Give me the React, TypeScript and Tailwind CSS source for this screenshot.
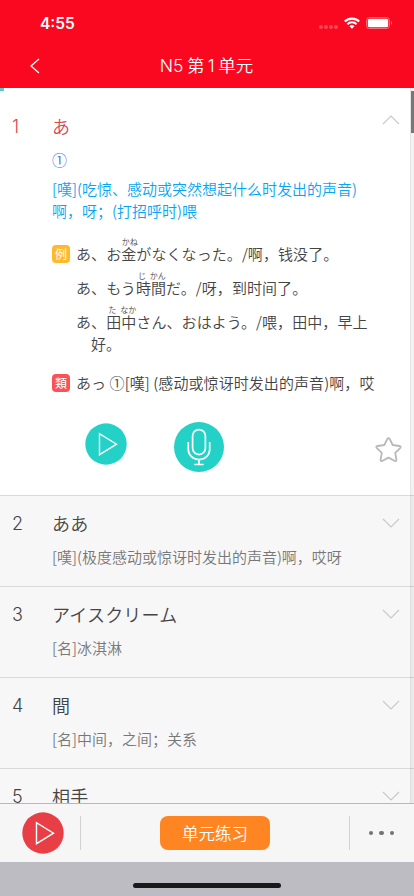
import type { ReactNode } from "react";

const words = [
  { id: 2, word: "ああ", meaning: "[嘆](极度感动或惊讶时发出的声音)啊，哎呀" },
  { id: 3, word: "アイスクリーム", meaning: "[名]冰淇淋" },
  { id: 4, word: "間", meaning: "[名]中间，之间；关系" },
  { id: 5, word: "相手", meaning: "[名]对方，对手" },
];

function StatusBar() {
  return (
    <div className="flex h-[44px] items-center justify-between pl-[40px] pr-[22px] pt-[2px]">
      <span className="pt-[1px] font-['Inter'] text-[15.5px] leading-none font-semibold">4:55</span>
      <div className="flex items-center">
        <div className="mt-[7px] mr-[6px] flex gap-[1px]">
          {[0, 1, 2, 3].map((i) => (
            <span key={i} className="size-[4px] rounded-full bg-white/25" />
          ))}
        </div>
        <svg width="16" height="12" viewBox="0 0 16 12" fill="none" stroke="currentColor" strokeWidth="2.1">
          <path d="M.8 4.6a10.2 10.2 0 0 1 14.4 0" />
          <path d="M3.4 7.2a6.5 6.5 0 0 1 9.2 0" />
          <path d="M5.5 9.3a3.5 3.5 0 0 1 5 0L8 11.8z" fill="currentColor" stroke="none" />
        </svg>
        <svg className="ml-[6px]" width="26" height="12" viewBox="0 0 26 12" fill="none">
          <rect x=".5" y=".5" width="23" height="11" rx="3" stroke="white" strokeOpacity=".4" />
          <rect x="1.8" y="1.8" width="20.4" height="8.4" rx="1.6" fill="white" />
          <path d="M25 4v4c1.2-.6 1.2-3.4 0-4" fill="white" fillOpacity=".5" />
        </svg>
      </div>
    </div>
  );
}

function Chevron({ up = false }: { up?: boolean }) {
  return (
    <svg width="18" height="10" viewBox="0 0 18 10" fill="none" stroke="#c8c8c8" strokeWidth="1.1">
      <path d={up ? "M1 9l8-8 8 8" : "M1 1l8 8 8-8"} />
    </svg>
  );
}

function PlayButton({ color }: { color: string }) {
  return (
    <button>
      <svg width="42" height="42" viewBox="0 0 42 42" fill="none">
        <circle cx="21" cy="21" r="20.7" fill={color} />
        <path d="M14.5 10.7v21l17-10.5z" stroke="white" strokeWidth="1.4" />
      </svg>
    </button>
  );
}

function Ruby({ reading, children }: { reading: string; children: ReactNode }) {
  return (
    <span className="relative inline-block leading-[22px]">
      {children}
      <span className="absolute -top-[6px] left-1/2 -translate-x-1/2 pl-[2px] text-[8px] leading-[10px] tracking-normal [word-spacing:2px] whitespace-pre">
        {reading}
      </span>
    </span>
  );
}

function Tag({ className, children }: { className: string; children: ReactNode }) {
  return (
    <span
      className={`mr-[6px] flex size-[18px] shrink-0 items-center justify-center rounded-[4px] text-[12px] leading-none font-normal text-white ${className}`}
    >
      {children}
    </span>
  );
}

function ActiveWord() {
  return (
    <section className="h-[407px] shrink-0 bg-white pt-[26px]">
      <div className="flex h-[24px] items-center pr-[14px] text-[18px] text-[#d6464e]">
        <span className="w-[52px] pl-[12px] font-['Inter'] font-light">1</span>
        <span className="flex-1">あ</span>
        <span className="-mt-[13px]">
          <Chevron up />
        </span>
      </div>

      <div className="pl-[52px] text-[15px]">
        <div className="mt-[11px] h-[22px] leading-[22px] text-[#5560f0]">①</div>
        <p className="mt-[7px] leading-[22px] text-[#08a5f4]">
          [嘆](吃惊、感动或突然想起什么时发出的声音)
          <br />
          啊，呀；(打招呼时)喂
        </p>

        <div className="mt-[15px] flex text-[#444]">
          <Tag className="mt-[8px] bg-[#ffb92c]">例</Tag>
          <div className="leading-[34px] tracking-[0.08px]">
            <p className="h-[34px]">
              あ、お<Ruby reading="かね">金</Ruby>がなくなった。/啊，钱没了。
            </p>
            <p className="h-[34px]">
              あ、もう<Ruby reading="じ かん">時間</Ruby>だ。/呀，到时间了。
            </p>
            <p className="h-[34px]">
              あ、<Ruby reading="た なか">田中</Ruby>さん、おはよう。/喂，田中，早上
            </p>
            <p className="-mt-[6px] h-[28px] pl-[15px] leading-[21px]">好。</p>
          </div>
        </div>
        <div className="mt-[11px] flex items-center leading-[22px] tracking-[0.08px] whitespace-nowrap text-[#444]">
          <Tag className="bg-[#fb525a]">類</Tag>
          <span>あっ ①[嘆] (感动或惊讶时发出的声音)啊，哎</span>
        </div>
      </div>

      <div className="mt-[27px] flex items-center pr-[12px] pl-[85px]">
        <div className="-mt-[6px] flex">
          <PlayButton color="#24d1c7" />
        </div>
        <button className="ml-[46px]">
          <svg width="52" height="52" viewBox="0 0 52 52" fill="none">
            <circle cx="26" cy="26" r="25" fill="#24d1c7" />
            <g stroke="white" strokeWidth="1.7">
              <rect x="19.6" y="8.6" width="12.8" height="25" rx="6.4" />
              <path d="M15.3 21v7.5a10.7 10 0 0 0 21.4 0V21M26 38.5v5M21.3 43.5h9.4" />
            </g>
          </svg>
        </button>
        <button className="mt-[5px] ml-auto">
          <svg width="27" height="26" viewBox="0 0 27 26" fill="none" stroke="#b9b9b9" strokeWidth="1.8" strokeLinejoin="round">
            <path d="M12.3 2q1.2-1.9 2.4 0l3 6 6.7 1q2.2.5.7 2.1l-4.9 4.7 1.2 6.7q.2 2.2-1.9 1.3l-6-3.2-6 3.2q-2.1.9-1.9-1.3l1.2-6.7-4.9-4.7q-1.5-1.6.7-2.1l6.7-1z" />
          </svg>
        </button>
      </div>
    </section>
  );
}

function WordRow({ id, word, meaning }: (typeof words)[number]) {
  return (
    <div className="h-[91px] shrink-0 border-t border-[#dadada] pt-[15px]">
      <div className="flex h-[24px] items-center pr-[14px] text-[18px] text-[#444]">
        <span className="w-[52px] pl-[12px] font-['Inter'] font-light">{id}</span>
        <span className="flex-1 tracking-[0.2px]">{word}</span>
        <Chevron />
      </div>
      <p className="mt-[11px] pl-[52px] text-[15px] leading-[22px] text-[#777]">{meaning}</p>
    </div>
  );
}

function BottomBar() {
  return (
    <footer className="shrink-0">
      <div className="flex h-[59px] items-center border-t border-[#b8b8b8] bg-[#f6f6f6] pr-[20px] pl-[22px]">
        <PlayButton color="#e83f46" />
        <span className="ml-[16px] h-[34px] w-px bg-[#d2d2d2]" />
        <button className="ml-[79px] h-[34px] w-[110px] rounded-[8px] bg-[#ff8522] text-[16.5px] leading-[34px] text-white">
          单元练习
        </button>
        <span className="ml-auto h-[34px] w-px bg-[#d2d2d2]" />
        <div className="ml-[19px] flex gap-[6px]">
          {[0, 1, 2].map((i) => (
            <span key={i} className="size-[4.5px] rounded-full bg-[#737373]" />
          ))}
        </div>
      </div>
      <div className="flex h-[34px] items-end justify-center bg-[#bdbcc2] pb-[8px]">
        <div className="h-[5px] w-[148px] rounded-full bg-[#191919]" />
      </div>
    </footer>
  );
}

export default function App() {
  return (
    <div className="flex h-[896px] w-[414px] flex-col overflow-hidden bg-[#f7f7f7] font-['Noto_Sans_CJK_SC',sans-serif] font-[350]">
      <header className="h-[88px] shrink-0 bg-[#f9081f] text-white">
        <StatusBar />
        <div className="relative flex h-[44px] items-center justify-center">
          <svg className="absolute left-[29px]" width="11" height="16" viewBox="0 0 11 16" fill="none" stroke="white" strokeWidth="1.3">
            <path d="M10 1L2 8l8 7" />
          </svg>
          <h1 className="pr-[1px] font-['Inter','Noto_Sans_CJK_SC',sans-serif] text-[17.5px] [word-spacing:-1.5px]">
            N5 第 1 单元
          </h1>
        </div>
      </header>

      <main className="relative flex min-h-0 flex-1 flex-col overflow-hidden">
        <ActiveWord />
        {words.map((item) => (
          <WordRow key={item.id} {...item} />
        ))}
        {/* Scrollbar and playback progress */}
        <div className="absolute top-0 right-0 h-full w-[4px] border-l border-black/5 bg-black/5">
          <div className="mt-[3px] h-[42px] w-[3px] bg-[#777]" />
        </div>
        <div className="absolute top-0 left-0 h-[3px] w-[4px] bg-[#54ccc8]" />
      </main>

      <BottomBar />
    </div>
  );
}
